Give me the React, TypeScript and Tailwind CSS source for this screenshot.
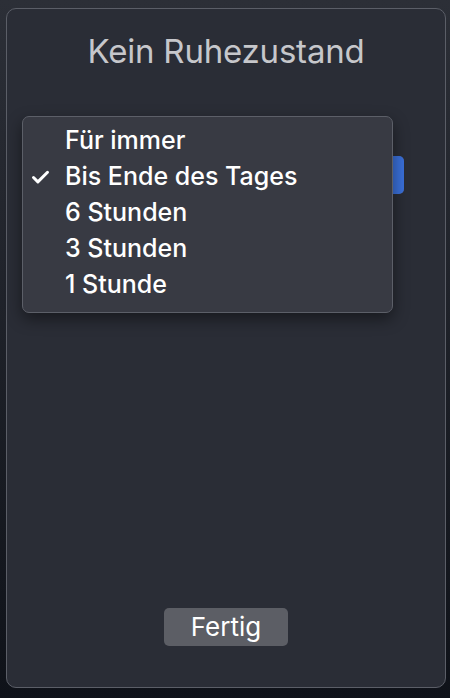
import { Check } from 'lucide-react';

const options = ['Für immer', 'Bis Ende des Tages', '6 Stunden', '3 Stunden', '1 Stunde'];

export default function App() {
  const selected = 'Bis Ende des Tages';

  return (
    <div
      className="w-[450px] h-[698px] overflow-hidden bg-gradient-to-b from-[#2c2f37] to-[#0f1219] pt-[8px] pl-[6px]"
      style={{ fontFamily: 'Inter, "Noto Sans", sans-serif' }}
    >
      {/* Sheet */}
      <div className="relative w-[440px] h-[680px] rounded-[10px] border border-[#5b5e67] bg-[#2a2d36] flex flex-col items-center">
        <h1 className="mt-[23px] text-[33px] leading-[38px] text-[#c6c7cb] tracking-[-0.2px]">Kein Ruhezustand</h1>

        {/* Popup button (mostly hidden behind the open menu) */}
        <div className="mt-[86px] self-start ml-[40px] flex h-[38px] w-[357px] rounded-[5px] bg-[#4a4d55]">
          <div className="ml-auto w-[12px] h-full rounded-r-[5px] bg-[#3a6fd8]" />
        </div>

        {/* Open menu */}
        <div className="absolute left-[15px] top-[107px] w-[371px] h-[197px] rounded-[7px] border border-[#5c5f68] bg-[#383a43] shadow-[0_6px_16px_rgba(0,0,0,0.45)] pt-[6px]">
          {options.map(opt => (
            <div key={opt} className="flex items-center h-[36px] text-[25px] font-medium text-white">
              <div className="w-[42px] flex justify-end pr-[14px]">
                {opt === selected && <Check className="w-[21px] h-[21px]" strokeWidth={3.4} />}
              </div>
              <span>{opt}</span>
            </div>
          ))}
        </div>

        {/* Done */}
        <button className="mt-auto mb-[41px] w-[124px] h-[38px] rounded-[5px] bg-[#5c5e65] text-[26px] leading-[38px] text-white">
          Fertig
        </button>
      </div>
    </div>
  );
}
